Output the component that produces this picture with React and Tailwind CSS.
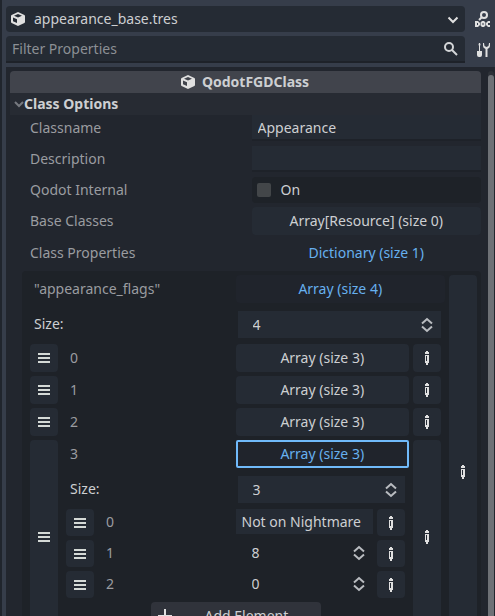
import React from "react";

const Cube = () => (
  <svg width="16" height="16" viewBox="0 0 16 16" className="shrink-0" aria-hidden="true">
    <path
      fill="#e0e0e0"
      fillRule="evenodd"
      d="M7.500 1.200 1.600 4Q1 4.300 1 5v6q0 .7.600 1l5.900 2.800q.5.200 1 0l5.900-2.800q.600-.3.600-1V5q0-.7-.6-1L8.500 1.200q-.5-.2-1 0ZM8 3l4 1.700-4 1.800-4-1.800ZM3 6.500l4 1.800v3.700l-4-1.800Z"
    />
  </svg>
);

const Pencil = () => (
  <svg width="16" height="16" viewBox="0 0 16 16" shapeRendering="crispEdges" aria-hidden="true">
    <path fill="#e0e0e0" d="M7 1h2v1h1v2H6V2h1ZM6 5h4v8H9v2H7v-2H6Z" />
    <path fill="#252b34" d="M7 6h1v5H7Z" />
  </svg>
);

const Bars = () => (
  <svg width="16" height="16" viewBox="0 0 16 16" shapeRendering="crispEdges" aria-hidden="true">
    <path fill="#d4d9d6" d="M2 3h12v2H2ZM2 7h12v2H2ZM2 11h12v2H2Z" />
  </svg>
);

const Updown = () => (
  <svg width="16" height="16" viewBox="0 0 16 16" className="shrink-0" aria-hidden="true">
    <path fill="none" stroke="#b9bcc0" strokeWidth="2" d="m3 6.500 5-4.500 5 4.500M3 9.500l5 4.500 5-4.500" />
  </svg>
);

const iconButton = "flex w-7 shrink-0 items-center justify-center rounded-sm bg-[#252b34]";

function Handle({ label }) {
  return (
    <button type="button" aria-label={label} className={iconButton}>
      <Bars />
    </button>
  );
}

function Edit({ label }) {
  return (
    <button type="button" aria-label={label} className={iconButton}>
      <Pencil />
    </button>
  );
}

function Property({ label, id, height = "h-[27px]", children }) {
  return (
    <div className={`ml-3 grid grid-cols-2 items-center ${height}`}>
      <label htmlFor={id} className="px-2 pb-px text-[#9a9ca0]">
        {label}
      </label>
      {children}
    </div>
  );
}

function SizeRow({ id, value }) {
  return (
    <div className="grid h-[27px] grid-cols-2 items-center gap-1">
      <label htmlFor={id} className="pb-px pl-1">
        Size:
      </label>
      <div className="flex h-full items-center bg-[#252b34] pr-1.5 pl-[15px]">
        <input id={id} defaultValue={value} className="w-full min-w-0 bg-transparent outline-none" />
        <Updown />
      </div>
    </div>
  );
}

function ArrayRow({ index }) {
  return (
    <div className="flex h-7 gap-1">
      <Handle label={`Move item ${index}`} />
      <div className="grid flex-1 grid-cols-2 items-center">
        <span className="pl-2 text-[#9a9ca0]">{index}</span>
        <button type="button" className="h-full rounded-sm bg-[#252b34]">
          Array (size 3)
        </button>
      </div>
      <Edit label={`Edit item ${index}`} />
    </div>
  );
}

function ValueRow({ index, value, text }) {
  return (
    <div className="flex h-[27px] gap-1">
      <Handle label={`Move value ${index}`} />
      <div className="grid flex-1 grid-cols-2 items-center">
        <label htmlFor={`value-${index}`} className="pb-px pl-2 text-[#9a9ca0]">
          {index}
        </label>
        {text ? (
          <input
            id={`value-${index}`}
            defaultValue={value}
            className="h-[26px] w-full min-w-0 self-start border-b border-[#1e2228] bg-[#252b34] px-1.5 outline-none"
          />
        ) : (
          <div className="flex items-center pr-1.5 pb-px pl-4">
            <input id={`value-${index}`} defaultValue={value} className="w-full min-w-0 bg-transparent outline-none" />
            <Updown />
          </div>
        )}
      </div>
      <Edit label={`Edit value ${index}`} />
    </div>
  );
}

export default function App() {
  return (
    <div className="flex h-screen flex-col overflow-hidden border-l-2 border-[#20252d] bg-[#363d4a] pl-1 font-['Noto_Sans',sans-serif] text-sm leading-5 text-[#cdcfd2]">
      <header className="flex flex-col gap-1 pt-1.5 pb-1">
        <div className="flex h-[26px] items-center">
          <button type="button" className="flex h-full flex-1 items-center gap-2 rounded-sm bg-[#252b34] pr-1 pl-1">
            <Cube />
            <span className="flex-1 text-left">appearance_base.tres</span>
            <svg width="16" height="16" viewBox="0 0 16 16" aria-hidden="true">
              <path fill="none" stroke="#e0e0e0" strokeWidth="2" d="m3.500 6.500 4.500 4.500 4.500-4.500" />
            </svg>
          </button>
          <button type="button" aria-label="Open documentation" className="flex w-[30px] justify-end pr-1">
            <svg width="16" height="16" viewBox="0 0 16 16" aria-hidden="true">
              <circle cx="9" cy="4" r="3" fill="none" stroke="#e0e0e0" strokeWidth="2" />
              <path stroke="#e0e0e0" strokeWidth="2" d="M7 6 4 9" />
              <path
                fill="#e0e0e0"
                fillRule="evenodd"
                d="M0 10h3l2 2v2l-2 2H0ZM2 12v2h1v-2ZM7 10h2l1.500 1.500v3L9 16H7l-1.500-1.500v-3ZM7.500 12v2h1v-2ZM13 10h2v2h-2v2h2v2h-2l-2-2v-2Z"
              />
            </svg>
          </button>
        </div>
        <div className="flex h-[27px] items-center">
          <div className="flex h-full flex-1 items-center rounded-t-sm border-b-2 border-[#1e2229] bg-[#252b34] pr-1.5 pl-1.5">
            <input
              aria-label="Filter Properties"
              placeholder="Filter Properties"
              className="w-full min-w-0 bg-transparent outline-none placeholder:text-[#8c9095]"
            />
            <svg width="16" height="16" viewBox="0 0 16 16" className="shrink-0" aria-hidden="true">
              <circle cx="6" cy="6" r="4" fill="none" stroke="#d4d6d8" strokeWidth="2" />
              <path stroke="#d4d6d8" strokeWidth="2" d="m9 9 5 5" />
            </svg>
          </div>
          <button type="button" aria-label="Manage properties" className="flex w-[30px] justify-end pr-1">
            <svg width="16" height="16" viewBox="0 0 16 16" aria-hidden="true">
              <path
                fill="#e0e0e0"
                d="M4 1h1l.5 1.500L5 4v5h2v4q0 2-2 2H4q-2 0-2-2V9h2V4l-.5-1.500ZM8 1v3q0 2 2.500 3v8h2V7Q15 6 15 4V1h-1l-.500 3-2 1-2-1L9 1Z"
              />
            </svg>
          </button>
        </div>
      </header>

      <main className="flex min-h-0 flex-1 gap-[7px] bg-[#22262e] pt-1 pr-px pl-1">
        <div className="min-w-0 flex-1 overflow-hidden">
          <h1 className="flex h-[22px] items-center justify-center gap-1.5 rounded-t-sm bg-[#41444c] pr-0.5 font-bold">
            <Cube />
            QodotFGDClass
          </h1>
          <button type="button" className="flex h-[22px] w-full items-center bg-[#272b33] pl-1 font-bold">
            <svg width="10" height="10" viewBox="0 0 10 10" aria-hidden="true">
              <path fill="none" stroke="#777a80" strokeWidth="2" d="m1 3 4 4 4-4" />
            </svg>
            Class Options
          </button>

          <div className="flex flex-col gap-1">
            <Property label="Classname" id="classname">
              <input
                id="classname"
                defaultValue="Appearance"
                className="h-[26px] w-full min-w-0 self-start border-b-2 border-[#1e2229] bg-[#252b34] px-1.5 outline-none"
              />
            </Property>
            <Property label="Description" id="description">
              <input
                id="description"
                className="h-[26px] w-full min-w-0 self-start border-b-2 border-[#1e2229] bg-[#252b34] px-1.5 outline-none"
              />
            </Property>
            <Property label="Qodot Internal" id="internal" height="h-[26px]">
              <div className="flex h-[26px] items-center gap-2.5 self-start rounded-sm bg-[#1e2228] px-[5px]">
                <input
                  id="internal"
                  type="checkbox"
                  className="size-3.5 appearance-none rounded-xs bg-[#434649] checked:bg-[#70bafa]"
                />
                <label htmlFor="internal">On</label>
              </div>
            </Property>
            <Property label="Base Classes" id="base" height="h-7">
              <button id="base" type="button" className="h-full rounded-sm bg-[#252b34]">
                Array[Resource] (size 0)
              </button>
            </Property>
            <Property label="Class Properties" id="properties" height="h-7">
              <button id="properties" type="button" className="h-full text-[#67b0ef]">
                Dictionary (size 1)
              </button>
            </Property>

            <div className="ml-3 flex gap-1 rounded-t-sm bg-[#1e2228] p-1">
              <div className="min-w-0 flex-1">
                <div className="grid h-7 grid-cols-2 items-center">
                  <span className="pl-2 text-[#9a9ca0]">"appearance_flags"</span>
                  <button type="button" className="h-full rounded-sm bg-[#20242c] text-[#67b0ef]">
                    Array (size 4)
                  </button>
                </div>
                <div className="px-1 pt-2 pb-[34px]">
                  <SizeRow id="outer-size" value="4" />
                  <div className="mt-1.5 flex flex-col gap-1">
                    <ArrayRow index={0} />
                    <ArrayRow index={1} />
                    <ArrayRow index={2} />
                    <div className="flex gap-1">
                      <Handle label="Move item 3" />
                      <div className="min-w-0 flex-1">
                        <div className="grid h-7 grid-cols-2 items-center">
                          <span className="pl-2 text-[#9a9ca0]">3</span>
                          <button
                            type="button"
                            className="h-full rounded-xs border-2 border-[#70bafa] bg-[#20242c] text-[#67b0ef]"
                          >
                            Array (size 3)
                          </button>
                        </div>
                        <div className="px-1 pt-2 pb-1">
                          <SizeRow id="inner-size" value="3" />
                          <div className="mt-1.5 flex flex-col gap-1">
                            <ValueRow index={0} value="Not on Nightmare" text />
                            <ValueRow index={1} value="8" />
                            <ValueRow index={2} value="0" />
                            <button
                              type="button"
                              className="flex h-7 w-[170px] items-center gap-8 self-center rounded-sm bg-[#30333b] pl-1.5"
                            >
                              <svg width="16" height="16" viewBox="0 0 16 16" aria-hidden="true">
                                <path stroke="#e0e0e0" strokeWidth="2" d="M8 1v14M1 8h14" />
                              </svg>
                              Add Element
                            </button>
                          </div>
                        </div>
                      </div>
                      <Edit label="Edit item 3" />
                    </div>
                  </div>
                </div>
              </div>
              <Edit label="Edit appearance_flags" />
            </div>
          </div>
        </div>
        <div className="w-1.5 rounded-t-full bg-[#2d3138] pt-1">
          <div className="h-full rounded-t-full bg-[#6e7176]" />
        </div>
      </main>
    </div>
  );
}
